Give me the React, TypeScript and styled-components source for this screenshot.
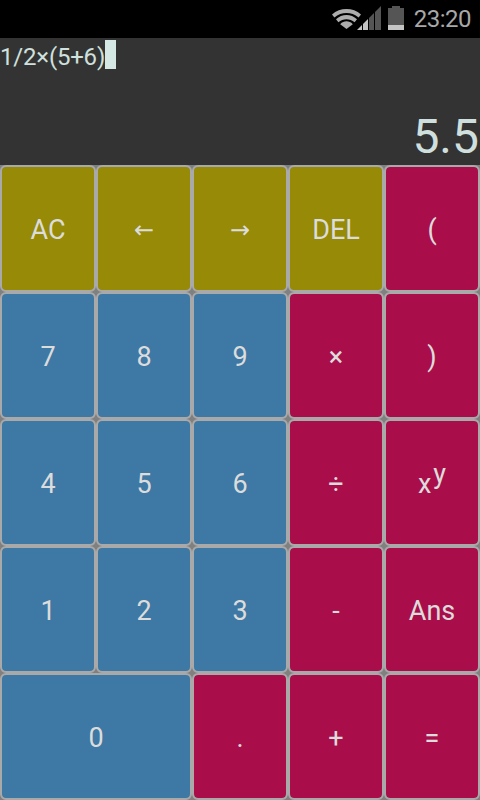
import React from 'react';
import styled, { createGlobalStyle } from 'styled-components';

type Tone = 'olive' | 'blue' | 'red';

type Key = {
  label: React.ReactNode;
  tone: Tone;
  wide?: boolean;
};

const TONES: Record<Tone, string> = {
  olive: '#968a06',
  blue: '#3e78a4',
  red: '#aa0e4a',
};

const GlobalStyle = createGlobalStyle`
  html, body {
    margin: 0;
    padding: 0;
    background: #000;
  }
`;

const Screen = styled.div`
  display: flex;
  flex-direction: column;
  width: 480px;
  height: 800px;
  overflow: hidden;
  font-family: Roboto, 'Noto Sans', sans-serif;
`;

const StatusBar = styled.div`
  display: flex;
  align-items: center;
  justify-content: flex-end;
  height: 38px;
  padding-right: 9px;
  box-sizing: border-box;
  background: #000;
  color: #a8a8a8;
`;

const Clock = styled.span`
  margin-left: 10px;
  font-size: 24px;
  letter-spacing: -0.5px;
  line-height: 38px;
`;

const WifiIcon = styled.svg`
  display: block;
  flex: none;
`;

const SignalIcon = styled.svg`
  display: block;
  flex: none;
  margin: 0 0 2px -4px;
`;

const BatteryIcon = styled.svg`
  display: block;
  flex: none;
  margin: 0 0 2px 7px;
`;

const Display = styled.div`
  display: flex;
  flex-direction: column;
  justify-content: space-between;
  height: 127px;
  box-sizing: border-box;
  background: #333;
  color: #cfdfdd;
`;

const Expression = styled.div`
  display: flex;
  align-items: center;
  height: 38px;
  font-size: 24px;
  letter-spacing: -0.2px;
  color: #d0e0de;
`;

const Cursor = styled.span`
  align-self: flex-start;
  width: 11px;
  height: 29px;
  margin-top: 2px;
  background: #d5e8e4;
`;

const Result = styled.div`
  padding-right: 1px;
  font-size: 48px;
  line-height: 56px;
  text-align: right;
`;

const Pad = styled.div`
  display: grid;
  grid-template-columns: repeat(5, 96px);
  grid-auto-rows: 127px;
  background: #808080;
`;

const PadKey = styled.button<{ $tone: Tone; $wide?: boolean }>`
  grid-column: ${({ $wide }) => ($wide ? 'span 2' : 'span 1')};
  display: flex;
  align-items: center;
  justify-content: center;
  margin: 0;
  padding: 3px 0 0;
  border: 2px solid #a9a9a9;
  border-radius: 6px;
  background: ${({ $tone }) => TONES[$tone]};
  background-clip: padding-box;
  color: #dcdcdc;
  font-family: inherit;
  font-size: 27px;
`;

const Arrow = styled.span`
  font-family: 'DejaVu Sans', sans-serif;
  font-size: 24px;
`;

const Power = styled.sup`
  position: relative;
  top: -10px;
  margin-left: 2px;
  font-size: 27px;
  line-height: 0;
  vertical-align: baseline;
`;

const KEYS: Key[] = [
  { label: 'AC', tone: 'olive' },
  { label: <Arrow>←</Arrow>, tone: 'olive' },
  { label: <Arrow>→</Arrow>, tone: 'olive' },
  { label: 'DEL', tone: 'olive' },
  { label: '(', tone: 'red' },
  { label: '7', tone: 'blue' },
  { label: '8', tone: 'blue' },
  { label: '9', tone: 'blue' },
  { label: '×', tone: 'red' },
  { label: ')', tone: 'red' },
  { label: '4', tone: 'blue' },
  { label: '5', tone: 'blue' },
  { label: '6', tone: 'blue' },
  { label: '÷', tone: 'red' },
  {
    label: (
      <span>
        x<Power>y</Power>
      </span>
    ),
    tone: 'red',
  },
  { label: '1', tone: 'blue' },
  { label: '2', tone: 'blue' },
  { label: '3', tone: 'blue' },
  { label: '-', tone: 'red' },
  { label: 'Ans', tone: 'red' },
  { label: '0', tone: 'blue', wide: true },
  { label: '.', tone: 'red' },
  { label: '+', tone: 'red' },
  { label: '=', tone: 'red' },
];

const Wifi = () => (
  <WifiIcon width="29" height="20" viewBox="0 0 29 20">
    <path d="M0 5.5 C8 -1.8 21 -1.8 29 5.5 L26.6 8.4 C19.5 2.6 9.5 2.6 2.4 8.4 Z" fill="#adadad" />
    <path d="M4 10.3 C10 4.6 19 4.6 25 10.3 L22.6 13.2 C18 9.3 11 9.3 6.4 13.2 Z" fill="#adadad" />
    <path d="M8.2 15.2 C11.8 11.4 17.2 11.4 20.8 15.2 L14.5 20 Z" fill="#adadad" />
  </WifiIcon>
);

const Signal = () => (
  <SignalIcon width="24" height="24" viewBox="0 0 24 24">
    <path d="M0 24 L5 19 V24 Z" fill="#c4c4c4" />
    <path d="M6 18 L11 13 V24 H6 Z" fill="#c4c4c4" />
    <path d="M12 12 L17 7 V24 H12 Z" fill="#555" />
    <path d="M18 6 L24 0 V24 H18 Z" fill="#555" />
  </SignalIcon>
);

const Battery = () => (
  <BatteryIcon width="16" height="24" viewBox="0 0 16 24">
    <path d="M4 0 H12 V2 H16 V24 H0 V2 H4 Z" fill="#555" />
    <rect x="0" y="19" width="16" height="5" fill="#c4c4c4" />
  </BatteryIcon>
);

export default function App() {
  return (
    <Screen>
      <GlobalStyle />
      <StatusBar>
        <Wifi />
        <Signal />
        <Battery />
        <Clock>23:20</Clock>
      </StatusBar>
      <Display>
        <Expression>
          1/2×(5+6)
          <Cursor />
        </Expression>
        <Result>5.5</Result>
      </Display>
      <Pad>
        {KEYS.map((key, index) => (
          <PadKey key={index} $tone={key.tone} $wide={key.wide}>
            {key.label}
          </PadKey>
        ))}
      </Pad>
    </Screen>
  );
}
